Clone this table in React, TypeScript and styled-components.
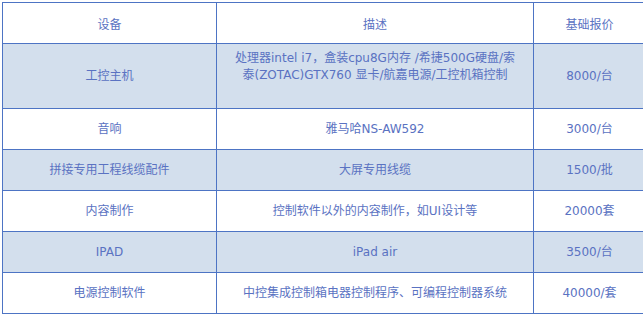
import React from 'react';
import styled, { createGlobalStyle } from 'styled-components';

const GlobalStyle = createGlobalStyle`
  html, body {
    margin: 0;
    padding: 0;
    background: #ffffff;
  }
`;

const Page = styled.div`
  padding: 2px 2px 0 2px;
  font-family: "DejaVu Sans", "Noto Sans CJK SC", sans-serif;
  font-size: 12px;
  color: #5a72c2;
`;

const Table = styled.table`
  width: 640px;
  border-collapse: collapse;
  table-layout: fixed;
`;

const Th = styled.th<{ $w: number }>`
  width: ${(p) => p.$w}px;
  height: 40px;
  padding: 0;
  border: 1px solid #4d74c4;
  font-weight: normal;
  text-align: center;
  vertical-align: middle;
`;

const Row = styled.tr<{ $shaded?: boolean; $tall?: boolean }>`
  height: ${(p) => (p.$tall ? 65 : 41)}px;
  background: ${(p) => (p.$shaded ? '#d3dfed' : '#ffffff')};
`;

const Td = styled.td<{ $top?: boolean }>`
  padding: ${(p) => (p.$top ? '6px 4px 0' : '0 4px')};
  border: 1px solid #4d74c4;
  text-align: center;
  vertical-align: ${(p) => (p.$top ? 'top' : 'middle')};
  line-height: 17px;
  white-space: nowrap;
`;

type Item = {
  name: string;
  desc: React.ReactNode;
  price: string;
  tall?: boolean;
};

const items: Item[] = [
  {
    name: '工控主机',
    desc: (
      <>
        处理器intel i7，盒装cpu8G内存 /希捷500G硬盘/索
        <br />
        泰(ZOTAC)GTX760 显卡/航嘉电源/工控机箱控制
      </>
    ),
    price: '8000/台',
    tall: true,
  },
  { name: '音响', desc: '雅马哈NS-AW592', price: '3000/台' },
  { name: '拼接专用工程线缆配件', desc: '大屏专用线缆', price: '1500/批' },
  { name: '内容制作', desc: '控制软件以外的内容制作，如UI设计等', price: '20000套' },
  { name: 'IPAD', desc: 'iPad air', price: '3500/台' },
  { name: '电源控制软件', desc: '中控集成控制箱电器控制程序、可编程控制器系统', price: '40000/套' },
];

const App: React.FC = () => {
  return (
    <Page>
      <GlobalStyle />
      <Table>
        <thead>
          <tr>
            <Th $w={213}>设备</Th>
            <Th $w={316}>描述</Th>
            <Th $w={111}>基础报价</Th>
          </tr>
        </thead>
        <tbody>
          {items.map((it, i) => (
            <Row key={i} $shaded={i % 2 === 0} $tall={it.tall}>
              <Td>{it.name}</Td>
              <Td $top={it.tall}>{it.desc}</Td>
              <Td>{it.price}</Td>
            </Row>
          ))}
        </tbody>
      </Table>
    </Page>
  );
};

export default App;
